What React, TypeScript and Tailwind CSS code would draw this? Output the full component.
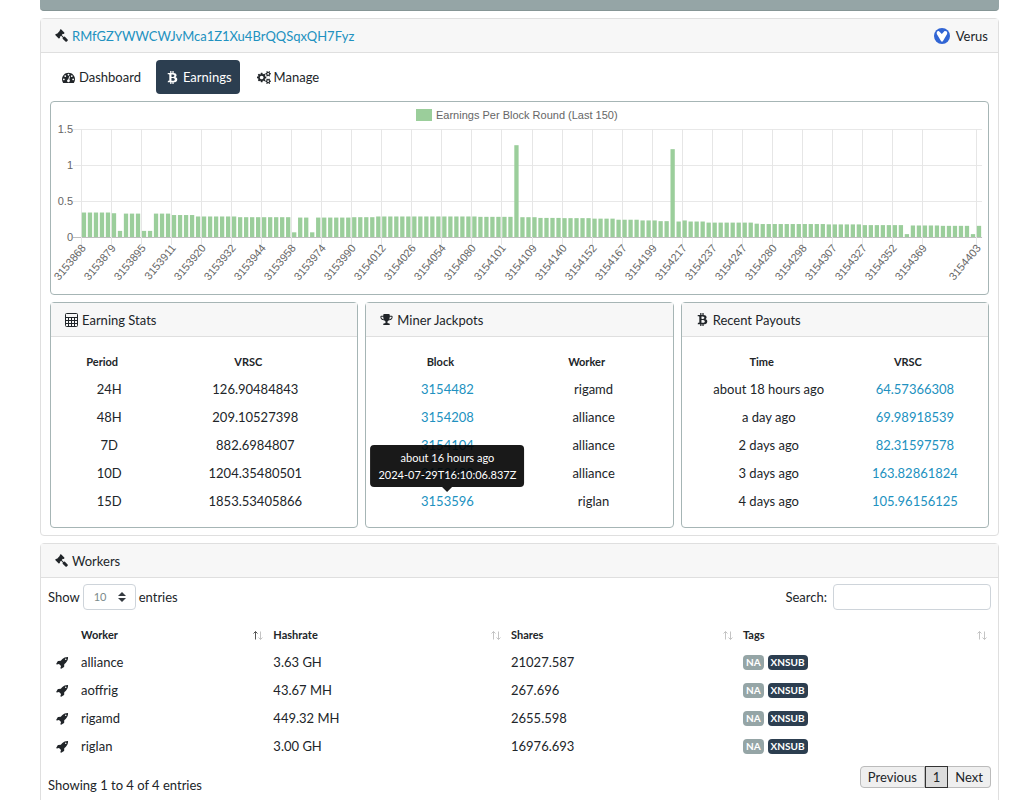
import type { ReactNode } from 'react';
import { FaBtc } from 'react-icons/fa';

const iconPaths = {
  gavel:
    'M1771 1536q0 53-37 90l-107 108q-39 37-91 37-53 0-90-37l-363-364q-38-36-38-90 0-53 43-96l-256-256-126 126q-14 14-34 14t-34-14q2 2 12.5 12t12.5 13 10 11.5 10 13.5 6 13.5 5.5 16.5 1.5 18q0 38-28 68-3 3-16.5 18t-19 20.5-18.5 16.5-22 15.5-22 9-26 4.5q-40 0-68-28l-408-408q-28-28-28-68 0-13 4.5-26t9-22 15.5-22 16.5-18.5 20.5-19 18-16.5q30-28 68-28 10 0 18 1.5t16.5 5.5 13.5 6 13.5 10 11.5 10 13 12.5 12 12.5q-14-14-14-34t14-34l348-348q14-14 34-14t34 14q-2-2-12.5-12t-12.5-13-10-11.5-10-13.5-6-13.5-5.5-16.5-1.5-18q0-38 28-68 3-3 16.5-18t19-20.5 18.5-16.5 22-15.5 22-9 26-4.5q40 0 68 28l408 408q28 28 28 68 0 13-4.5 26t-9 22-15.5 22-16.5 18.5-20.5 19-18 16.5q-30 28-68 28-10 0-18-1.5t-16.5-5.5-13.5-6-13.5-10-11.5-10-13-12.5-12-12.5q14 14 14 34t-14 34l-126 126 256 256q43-43 96-43 52 0 91 37l363 363q37 39 37 91z',
  dashboard:
    'M384 1152q0-53-37.5-90.5t-90.5-37.5-90.5 37.5-37.5 90.5 37.5 90.5 90.5 37.5 90.5-37.5 37.5-90.5zm192-448q0-53-37.5-90.5t-90.5-37.5-90.5 37.5-37.5 90.5 37.5 90.5 90.5 37.5 90.5-37.5 37.5-90.5zm428 481l101-382q6-26-7.5-48.5t-38.5-29.5-48 6.5-30 39.5l-101 382q-60 5-107 43.5t-63 98.5q-20 77 20 146t117 89 146-20 89-117q16-60-6-117t-72-91zm660-33q0-53-37.5-90.5t-90.5-37.5-90.5 37.5-37.5 90.5 37.5 90.5 90.5 37.5 90.5-37.5 37.5-90.5zm-640-640q0-53-37.5-90.5t-90.5-37.5-90.5 37.5-37.5 90.5 37.5 90.5 90.5 37.5 90.5-37.5 37.5-90.5zm448 192q0-53-37.5-90.5t-90.5-37.5-90.5 37.5-37.5 90.5 37.5 90.5 90.5 37.5 90.5-37.5 37.5-90.5zm320 448q0 261-141 483-19 29-54 29h-1402q-35 0-54-29-141-221-141-483 0-182 71-348t191-286 286-191 348-71 348 71 286 191 191 286 71 348z',
  cogs:
    'M896 896q0-106-75-181t-181-75-181 75-75 181 75 181 181 75 181-75 75-181zm768 512q0-52-38-90t-90-38-90 38-38 90q0 53 37.5 90.5t90.5 37.5 90.5-37.5 37.5-90.5zm0-1024q0-52-38-90t-90-38-90 38-38 90q0 53 37.5 90.5t90.5 37.5 90.5-37.5 37.5-90.5zm-384 421v185q0 10-7 19.5t-16 10.5l-155 24q-11 35-32 76 34 48 90 115 7 11 7 20 0 12-7 19-23 30-82.5 89.5t-78.5 59.5q-11 0-21-7l-115-90q-37 19-77 31-11 108-23 155-7 24-30 24h-186q-11 0-20-7.5t-10-17.5l-23-153q-34-10-75-31l-118 89q-7 7-20 7-11 0-21-8-144-133-144-160 0-9 7-19 10-14 41-53t47-61q-23-44-35-82l-152-24q-10-1-17-9.5t-7-19.5v-185q0-10 7-19.5t16-10.5l155-24q11-35 32-76-34-48-90-115-7-11-7-20 0-12 7-20 22-30 82-89t79-59q11 0 21 7l115 90q34-18 77-32 11-108 23-154 7-24 30-24h186q11 0 20 7.5t10 17.5l23 153q34 10 75 31l118-89q8-7 20-7 11 0 21 8 144 133 144 160 0 8-7 19-12 16-42 54t-45 60q23 48 34 82l152 23q10 2 17 10.5t7 19.5zm640 533v140q0 16-149 31-12 27-30 52 51 113 51 138 0 4-4 7-122 71-124 71-8 0-46-47t-52-68q-20 2-30 2t-30-2q-14 21-52 68t-46 47q-2 0-124-71-4-3-4-7 0-25 51-138-18-25-30-52-149-15-149-31v-140q0-16 149-31 13-29 30-52-51-113-51-138 0-4 4-7 4-2 35-20t59-34 30-16q8 0 46 46.5t52 67.5q20-2 30-2t30 2q51-71 92-112l6-2q4 0 124 70 4 3 4 7 0 25-51 138 17 23 30 52 149 15 149 31zm0-1024v140q0 16-149 31-12 27-30 52 51 113 51 138 0 4-4 7-122 71-124 71-8 0-46-47t-52-68q-20 2-30 2t-30-2q-14 21-52 68t-46 47q-2 0-124-71-4-3-4-7 0-25 51-138-18-25-30-52-149-15-149-31v-140q0-16 149-31 13-29 30-52-51-113-51-138 0-4 4-7 4-2 35-20t59-34 30-16q8 0 46 46.5t52 67.5q20-2 30-2t30 2q51-71 92-112l6-2q4 0 124 70 4 3 4 7 0 25-51 138 17 23 30 52 149 15 149 31z',
  trophy:
    'M522 883q-74-162-74-371h-256v96q0 78 94.5 162t235.5 113zm1078-275v-96h-256q0 209-74 371 141-29 235.5-113t94.5-162zm128-128v128q0 71-41.5 143t-112 130-173 97.5-215.5 44.5q-42 54-95 95-38 34-52.5 72.5t-14.5 89.5q0 54 30.5 91t97.5 37q75 0 133.5 45.5t58.5 114.5v64q0 14-9 23t-23 9h-832q-14 0-23-9t-9-23v-64q0-69 58.5-114.5t133.5-45.5q67 0 97.5-37t30.5-91q0-51-14.5-89.5t-52.5-72.5q-53-41-95-95-113-5-215.5-44.5t-173-97.5-112-130-41.5-143v-128q0-40 28-68t68-28h288v-96q0-66 47-113t113-47h576q66 0 113 47t47 113v96h288q40 0 68 28t28 68z',
  rocket:
    'M1440 448q0-40-28-68t-68-28-68 28-28 68 28 68 68 28 68-28 28-68zm224-288q0 249-75.5 430.5t-253.5 360.5q-81 80-195 176l-20 379q-2 16-16 26l-384 224q-7 4-16 4-12 0-23-9l-64-64q-13-14-8-32l85-276-281-281-276 85q-3 1-9 1-14 0-23-9l-64-64q-17-19-5-39l224-384q10-14 26-16l379-20q96-114 176-195 188-187 358-258t431-71q14 0 24 9.5t10 22.5z',
};

const Icon = ({ name }: { name: keyof typeof iconPaths }) => (
  <svg viewBox="0 0 1792 1792" className="size-[13px] shrink-0 overflow-visible fill-current" aria-hidden="true">
    <path d={iconPaths[name]} />
  </svg>
);

const CalculatorIcon = () => (
  <svg viewBox="0 0 13 14" className="h-[14px] w-[13px] shrink-0" aria-hidden="true">
    <rect x="0.5" y="0.5" width="12" height="13" rx="1" fill="none" stroke="currentColor" />
    <path d="M1 4.5h11M1 7.5h11M1 10.5h11M3.5 4.5v9M6.5 4.5v9M9.5 4.5v9" stroke="currentColor" fill="none" />
  </svg>
);

const VerusLogo = () => (
  <svg viewBox="0 0 16 16" className="size-4 shrink-0" aria-hidden="true">
    <circle cx="8" cy="8" r="8" fill="#3165d4" />
    <path d="M7.300 13.500 2.800 6Q2.200 2.900 4.800 3L7.800 6 10.600 3q3.300-.2 2.500 3L8.700 13.500z" fill="#fff" />
  </svg>
);

const bars: [number, number][] = [
  // [how many, value]
  [5, 0.34], [1, 0.33], [1, 0.085], [3, 0.325], [2, 0.085], [3, 0.325], [4, 0.305], [7, 0.285],
  [9, 0.275], [1, 0.065], [2, 0.27], [1, 0.065], [6, 0.27], [4, 0.275], [17, 0.285], [6, 0.28],
  [1, 1.275], [3, 0.275], [4, 0.265], [5, 0.262], [4, 0.255], [4, 0.24], [3, 0.23], [2, 0.22],
  [1, 1.22], [1, 0.215], [1, 0.23], [3, 0.215], [8, 0.2], [1, 0.185], [11, 0.18], [6, 0.175],
  [7, 0.165], [1, 0.04], [5, 0.16], [5, 0.155], [1, 0.04], [1, 0.155],
];
const values = bars.flatMap(([count, value]) => Array<number>(count).fill(value));

const blocks = [
  3153868, 3153879, 3153895, 3153911, 3153920, 3153932, 3153944, 3153958, 3153974, 3153990, 3154012, 3154026, 3154054,
  3154080, 3154101, 3154109, 3154140, 3154152, 3154167, 3154199, 3154217, 3154237, 3154247, 3154280, 3154298, 3154307,
  3154327, 3154352, 3154369,
];
const ticks = [...blocks.map((block, i) => ({ block, at: i * 5 })), { block: 3154403, at: 149 }];

const LEFT = 30;
const STEP = 6.007;
const BASE = 135;
const UNIT = 72;

const EarningsChart = () => (
  <svg viewBox="0 0 937 192" className="block w-full font-['Liberation_Sans',sans-serif]" role="img" aria-label="Earnings Per Block Round">
    {[0, 0.5, 1, 1.5].map((v) => (
      <g key={v}>
        <line x1={LEFT - 8} x2={LEFT + 150 * STEP} y1={BASE - v * UNIT + 0.5} y2={BASE - v * UNIT + 0.5} stroke={v ? '#e8e8e8' : '#bfbfbf'} />
        <text x={LEFT - 8} y={BASE - v * UNIT + 4} textAnchor="end" fontSize="11" fill="#666">
          {v}
        </text>
      </g>
    ))}
    {ticks.map(({ block, at }) => {
      const x = Math.round(LEFT + at * STEP) + 0.5;
      return (
        <g key={block}>
          <line x1={x} x2={x} y1={BASE - 1.5 * UNIT} y2={BASE + 8} stroke="#e6e6e6" />
          <text x={x + 3} y={BASE + 15} textAnchor="end" fontSize="11" fill="#666" transform={`rotate(-50 ${x} ${BASE + 11})`}>
            {block}
          </text>
        </g>
      );
    })}
    {values.map((v, i) => (
      <rect key={i} x={LEFT + i * STEP + 0.8} y={BASE - v * UNIT} width="4.300" height={v * UNIT} fill="#9bce9b" />
    ))}
    <rect x="365" y="7" width="16" height="12" fill="#9bce9b" />
    <text x="385" y="17" fontSize="11" fill="#666">
      Earnings Per Block Round (Last 150)
    </text>
  </svg>
);

const PanelHeader = ({ icon, children }: { icon: ReactNode; children: ReactNode }) => (
  <div className="flex h-[34px] items-center border-b border-[#dfdfdf] bg-[#f7f7f7] px-[14px]">
    {icon}
    <span className="ml-1">{children}</span>
  </div>
);

type Row = [ReactNode, ReactNode];

type StatsPanelProps = {
  icon: ReactNode;
  title: string;
  head: [string, string];
  rows: Row[];
  firstCol?: string;
  padding?: string;
};

const StatsPanel = ({ icon, title, head, rows, firstCol = 'w-1/2', padding = 'px-[7px]' }: StatsPanelProps) => (
  <section className="flex-1 rounded border border-[#a6b5b5] bg-white">
    <PanelHeader icon={icon}>{title}</PanelHeader>
    <div className={`pt-3 pb-3 ${padding}`}>
      <table className="w-full table-fixed text-center">
        <thead>
          <tr className="h-[26px] text-[11px]">
            <th className={`pr-[14px] ${firstCol}`}>{head[0]}</th>
            <th className="pr-[14px]">{head[1]}</th>
          </tr>
        </thead>
        <tbody>
          {rows.map(([a, b], i) => (
            <tr key={i} className="h-7">
              <td>{a}</td>
              <td>{b}</td>
            </tr>
          ))}
        </tbody>
      </table>
    </div>
  </section>
);

const Link = ({ children }: { children: ReactNode }) => (
  <a href="#" className="text-[#2191c0]">
    {children}
  </a>
);

const SortArrows = ({ active }: { active?: boolean }) => (
  <svg viewBox="0 0 10 9" className="h-[9px] w-[10px]" fill="none" aria-hidden="true">
    <path d="M2.500 8.500v-8M.5 2.500l2-2 2 2" stroke={active ? '#555' : '#c4c4c4'} />
    <path d="M7.500.5v8M5.500 6.500l2 2 2-2" stroke="#c4c4c4" />
  </svg>
);

const earnings: Row[] = [
  ['24H', '126.90484843'],
  ['48H', '209.10527398'],
  ['7D', '882.6984807'],
  ['10D', '1204.35480501'],
  ['15D', '1853.53405866'],
];

const jackpots: Row[] = [
  [<Link>3154482</Link>, 'rigamd'],
  [<Link>3154208</Link>, 'alliance'],
  [<Link>3154104</Link>, 'alliance'],
  [<Link>3153690</Link>, 'alliance'],
  [
    <span className="relative inline-block">
      <Link>3153596</Link>
      <span role="tooltip" className="absolute bottom-full left-1/2 mb-[3px] -translate-x-1/2 rounded bg-black/90 px-2 py-1 text-[11px] leading-[17px] whitespace-nowrap text-white">
        about 16 hours ago
        <br />
        2024-07-29T16:10:06.837Z
        <span className="absolute top-full left-1/2 -translate-x-1/2 border-x-[5px] border-t-[5px] border-x-transparent border-t-black/90" />
      </span>
    </span>,
    'riglan',
  ],
];

const payouts: Row[] = [
  ['about 18 hours ago', <Link>64.57366308</Link>],
  ['a day ago', <Link>69.98918539</Link>],
  ['2 days ago', <Link>82.31597578</Link>],
  ['3 days ago', <Link>163.82861824</Link>],
  ['4 days ago', <Link>105.96156125</Link>],
];

const workers = [
  { name: 'alliance', hashrate: '3.63 GH', shares: '21027.587' },
  { name: 'aoffrig', hashrate: '43.67 MH', shares: '267.696' },
  { name: 'rigamd', hashrate: '449.32 MH', shares: '2655.598' },
  { name: 'riglan', hashrate: '3.00 GH', shares: '16976.693' },
];

const tabs = [
  { label: 'Dashboard', icon: <Icon name="dashboard" /> },
  { label: 'Earnings', icon: <FaBtc />, active: true },
  { label: 'Manage', icon: <Icon name="cogs" /> },
];

const columns = [
  { label: 'Worker', width: 'w-[20.400%]', active: true },
  { label: 'Hashrate', width: 'w-[25.200%]' },
  { label: 'Shares', width: 'w-[24.600%]' },
  { label: 'Tags', width: 'w-auto' },
];

export default function App() {
  return (
    <main className="min-h-screen bg-white pr-[18px] pl-10 font-[Lato,sans-serif] text-[13px] leading-[22px] text-[#212529]">
      <div className="h-[11px] rounded-b border-b border-[#859595] bg-[#95a5a6]" />

      <section className="mt-[7px] rounded border border-[#dfdfdf]">
        <header className="flex h-[34px] items-center justify-between border-b border-[#dfdfdf] bg-[#f7f7f7] pr-[10px] pl-[14px]">
          <div className="flex items-center gap-1">
            <Icon name="gavel" />
            <Link>RMfGZYWWCWJvMca1Z1Xu4BrQQSqxQH7Fyz</Link>
          </div>
          <div className="flex items-center gap-[6px]">
            <VerusLogo />
            Verus
          </div>
        </header>

        <div className="px-[9px] pt-[7px] pb-[7px]">
          <nav className="mb-[7px] flex gap-[7px] pl-[2px]">
            {tabs.map((tab) => (
              <button
                key={tab.label}
                className={
                  tab.active
                    ? 'flex h-[34px] items-center gap-[2px] rounded bg-[#2c3e50] px-2 text-white'
                    : 'flex h-[34px] items-center gap-[2px] rounded px-2'
                }
              >
                <span className="flex w-[17px] justify-center">{tab.icon}</span>
                {tab.label}
              </button>
            ))}
          </nav>

          <div className="rounded border border-[#a6b5b5]">
            <EarningsChart />
          </div>

          <div className="mt-[7px] flex gap-[7px]">
            <StatsPanel icon={<CalculatorIcon />} title="Earning Stats" head={['Period', 'VRSC']} rows={earnings} firstCol="w-[35%]" />
            <StatsPanel icon={<Icon name="trophy" />} title="Miner Jackpots" head={['Block', 'Worker']} rows={jackpots} padding="pr-[6px] pl-2" />
            <StatsPanel icon={<FaBtc />} title="Recent Payouts" head={['Time', 'VRSC']} rows={payouts} padding="pl-[14px]" />
          </div>
        </div>
      </section>

      <section className="mt-[7px] rounded border border-[#dfdfdf]">
        <PanelHeader icon={<Icon name="gavel" />}>Workers</PanelHeader>

        <div className="px-[7px] pt-[6px] pb-4">
          <div className="flex items-center justify-between">
            <label className="flex items-center gap-[3px]">
              Show
              <span className="relative">
                <select className="block h-[26px] w-[53px] appearance-none rounded border border-[#ced4da] bg-white pl-[10px] text-[11px] text-[#7b8a8b]">
                  <option>10</option>
                </select>
                <svg viewBox="0 0 8 10" className="pointer-events-none absolute top-2 right-[10px] h-[10px] w-2 fill-[#343a40]" aria-hidden="true">
                  <path d="M0 4l4-4 4 4zM0 6l4 4 4-4z" />
                </svg>
              </span>
              entries
            </label>
            <label className="flex items-center gap-[6px]">
              Search:
              <input type="search" className="h-[26px] w-[158px] rounded border border-[#ced4da] px-2" />
            </label>
          </div>

          <table className="mt-3 w-full table-fixed text-left">
            <thead>
              <tr className="h-[26px] text-[11px]">
                <th className="w-[27px]" />
                {columns.map((col) => (
                  <th key={col.label} className={col.width}>
                    <div className="flex items-center justify-between pr-1 pl-[6px]">
                      {col.label}
                      <SortArrows active={col.active} />
                    </div>
                  </th>
                ))}
              </tr>
            </thead>
            <tbody>
              {workers.map((w) => (
                <tr key={w.name} className="h-7">
                  <td className="pl-2">
                    <Icon name="rocket" />
                  </td>
                  <td className="px-[6px]">{w.name}</td>
                  <td className="px-[6px]">{w.hashrate}</td>
                  <td className="px-[6px]">{w.shares}</td>
                  <td className="px-[6px]">
                    <span className="flex gap-1 text-[10px] leading-[15px] font-bold text-white">
                      <span className="rounded bg-[#95a5a6] px-[3px]">NA</span>
                      <span className="rounded bg-[#2c3e50] px-[3px]">XNSUB</span>
                    </span>
                  </td>
                </tr>
              ))}
            </tbody>
          </table>

          <div className="mt-[6px] flex items-start justify-between">
            <p className="mt-2">Showing 1 to 4 of 4 entries</p>
            <div className="flex leading-5">
              <button className="rounded-l border border-[#bbb] bg-[#efefef] px-[7px]">Previous</button>
              <button className="border border-[#333] bg-[#dcdcdc] px-[7px]">1</button>
              <button className="rounded-r border border-l-0 border-[#bbb] bg-[#efefef] px-[7px]">Next</button>
            </div>
          </div>
        </div>
      </section>
    </main>
  );
}
